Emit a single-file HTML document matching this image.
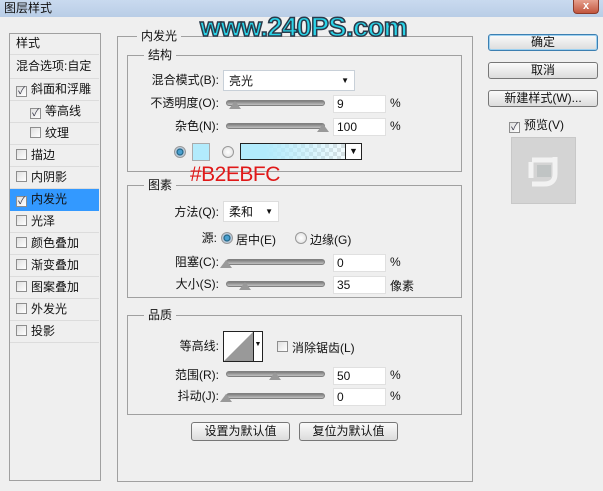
<!DOCTYPE html>
<html><head><meta charset="utf-8"><style>
*{margin:0;padding:0;box-sizing:border-box}
body{width:603px;height:491px;background:#efefef;position:relative;overflow:hidden;font-family:"Liberation Sans","Noto Sans CJK SC",sans-serif;font-size:12px;color:#111}
.a{position:absolute}
.title{left:0;top:0;width:603px;height:17px;background:linear-gradient(#c9daef,#b9cde6);}
.close{left:573px;top:0;width:26px;height:14px;background:linear-gradient(#e6a08e,#c2563e);border:1px solid #8c3a2a;border-top:none;border-radius:0 0 4px 4px;color:#fff;font-weight:bold;font-size:11px;text-align:center;line-height:13px}
.box{border:1px solid #a0a0a0}
.lbl{background:#efefef;padding:0 4px;line-height:14px}
.row{position:absolute;left:10px;width:89px;height:22px;border-bottom:1px solid #dcdcdc;line-height:21px;padding-left:6px;white-space:nowrap}
.cb{display:inline-block;width:11px;height:11px;border:1px solid #8e8e8e;background:linear-gradient(135deg,#e0e0e0,#fff);vertical-align:-1px;margin-right:4px;position:relative;font-size:10px;line-height:9px;text-align:center;color:#334}
.r{text-align:right;line-height:14px}
.inp{background:#fff;border:1px solid #e0e0e0;height:18px;line-height:17px;padding-left:3px}
.sl{height:6px;border-radius:3px;background:linear-gradient(#7d7d7d,#c0c0c0);border:1px solid #808080}
.h{width:0;height:0;border-left:6px solid transparent;border-right:6px solid transparent;border-bottom:8px solid #999}
.btn{border:1px solid #777;border-radius:3px;background:linear-gradient(#fafafa,#dcdcdc);text-align:center;line-height:15px}
.rad{width:12px;height:12px;border-radius:50%;border:1px solid #999;background:radial-gradient(#fff,#ddd)}
.rad.on{background:radial-gradient(#4aa0d0 0 2px,#135878 3px,#bcd 4px)}
</style></head><body>
<div class="a title"></div>
<div class="a" style="left:4px;top:1px;font-size:12px;line-height:14px">图层样式</div>
<div class="a close">x</div>

<div class="a box" style="left:9px;top:33px;width:92px;height:448px;background:#efefef"></div>
<div class="row" style="top:33px">样式</div>
<div class="row" style="top:55px;height:24px;line-height:23px">混合选项:自定</div>
<div class="row" style="top:79px"><span class="cb">✓</span>斜面和浮雕</div>
<div class="row" style="top:101px;padding-left:20px"><span class="cb">✓</span>等高线</div>
<div class="row" style="top:123px;padding-left:20px"><span class="cb"></span>纹理</div>
<div class="row" style="top:145px"><span class="cb"></span>描边</div>
<div class="row" style="top:167px"><span class="cb"></span>内阴影</div>
<div class="row" style="top:189px;background:#3399ff;border-color:#3399ff"><span class="cb">✓</span>内发光</div>
<div class="row" style="top:211px"><span class="cb"></span>光泽</div>
<div class="row" style="top:233px"><span class="cb"></span>颜色叠加</div>
<div class="row" style="top:255px"><span class="cb"></span>渐变叠加</div>
<div class="row" style="top:277px"><span class="cb"></span>图案叠加</div>
<div class="row" style="top:299px"><span class="cb"></span>外发光</div>
<div class="row" style="top:321px"><span class="cb"></span>投影</div>

<div class="a box" style="left:117px;top:36px;width:356px;height:446px"></div>
<div class="a lbl" style="left:137px;top:29px">内发光</div>
<div class="a box" style="left:127px;top:55px;width:335px;height:117px"></div>
<div class="a lbl" style="left:144px;top:48px">结构</div>

<div class="a r" style="left:130px;top:73px;width:89px">混合模式(B):</div>
<div class="a inp" style="left:223px;top:70px;width:132px;height:21px;line-height:20px;border-color:#c8d0d8;padding-left:5px">亮光<span style="position:absolute;right:5px;top:0;font-size:8px">▼</span></div>

<div class="a r" style="left:130px;top:96px;width:89px">不透明度(O):</div>
<div class="a sl" style="left:226px;top:100px;width:99px"></div>
<div class="a h" style="left:229px;top:101px"></div>
<div class="a inp" style="left:333px;top:95px;width:53px">9</div>
<div class="a" style="left:390px;top:96px">%</div>

<div class="a r" style="left:130px;top:119px;width:89px">杂色(N):</div>
<div class="a sl" style="left:226px;top:123px;width:99px"></div>
<div class="a h" style="left:317px;top:124px"></div>
<div class="a inp" style="left:333px;top:118px;width:53px">100</div>
<div class="a" style="left:390px;top:119px">%</div>

<div class="a rad on" style="left:174px;top:146px"></div>
<div class="a" style="left:192px;top:143px;width:18px;height:18px;background:#b2ebfc;border:1px solid #aaa"></div>
<div class="a rad" style="left:222px;top:146px"></div>
<div class="a" style="left:240px;top:143px;width:122px;height:17px;border:1px solid #222;background:linear-gradient(90deg,#b2ebfc 20%,rgba(178,235,252,0)),repeating-conic-gradient(#ddd 0 25%,#fff 0 50%) 0 0/8px 8px"></div>
<div class="a" style="left:345px;top:143px;width:17px;height:17px;border:1px solid #222;background:#fff;font-size:9px;text-align:center;line-height:15px">▼</div>

<div class="a" style="left:190px;top:163px;color:#e01818;font-size:21px;line-height:24px;letter-spacing:-0.5px">#B2EBFC</div>

<div class="a box" style="left:127px;top:185px;width:335px;height:113px"></div>
<div class="a lbl" style="left:144px;top:178px">图素</div>
<div class="a r" style="left:130px;top:205px;width:89px">方法(Q):</div>
<div class="a inp" style="left:223px;top:201px;width:56px;height:21px;line-height:20px;border-color:#ddd;padding-left:5px">柔和<span style="position:absolute;right:5px;top:0;font-size:8px">▼</span></div>
<div class="a r" style="left:130px;top:231px;width:87px">源:</div>
<div class="a rad on" style="left:221px;top:232px"></div>
<div class="a" style="left:236px;top:231px">居中(E)</div>
<div class="a rad" style="left:295px;top:232px"></div>
<div class="a" style="left:310px;top:231px">边缘(G)</div>
<div class="a r" style="left:130px;top:255px;width:89px">阻塞(C):</div>
<div class="a sl" style="left:226px;top:259px;width:99px"></div>
<div class="a h" style="left:220px;top:260px"></div>
<div class="a inp" style="left:333px;top:254px;width:53px">0</div>
<div class="a" style="left:390px;top:255px">%</div>
<div class="a r" style="left:130px;top:277px;width:89px">大小(S):</div>
<div class="a sl" style="left:226px;top:281px;width:99px"></div>
<div class="a h" style="left:239px;top:282px"></div>
<div class="a inp" style="left:333px;top:276px;width:53px">35</div>
<div class="a" style="left:390px;top:277px">像素</div>

<div class="a box" style="left:127px;top:315px;width:335px;height:100px"></div>
<div class="a lbl" style="left:144px;top:308px">品质</div>
<div class="a r" style="left:130px;top:339px;width:89px">等高线:</div>
<div class="a" style="left:223px;top:331px;width:40px;height:31px;border:1px solid #222;background:#fff"></div>
<svg class="a" style="left:224px;top:332px" width="29" height="29"><polygon points="0,29 29,0 29,29" fill="#999"/></svg>
<div class="a" style="left:253px;top:331px;width:10px;height:31px;border:1px solid #222;background:#fff;font-size:7px;text-align:center;line-height:26px">▼</div>
<div class="a" style="left:277px;top:340px"><span class="cb"></span></div>
<div class="a" style="left:292px;top:339px">消除锯齿(L)</div>
<div class="a r" style="left:130px;top:368px;width:89px">范围(R):</div>
<div class="a sl" style="left:226px;top:371px;width:99px"></div>
<div class="a h" style="left:269px;top:372px"></div>
<div class="a inp" style="left:333px;top:367px;width:53px">50</div>
<div class="a" style="left:390px;top:368px">%</div>
<div class="a r" style="left:130px;top:389px;width:89px">抖动(J):</div>
<div class="a sl" style="left:226px;top:393px;width:99px"></div>
<div class="a h" style="left:220px;top:394px"></div>
<div class="a inp" style="left:333px;top:388px;width:53px">0</div>
<div class="a" style="left:390px;top:389px">%</div>

<div class="a btn" style="left:191px;top:422px;width:99px;height:19px;line-height:17px">设置为默认值</div>
<div class="a btn" style="left:299px;top:422px;width:99px;height:19px;line-height:17px">复位为默认值</div>

<div class="a btn" style="left:488px;top:34px;width:110px;height:17px;border-color:#3c7fb1;box-shadow:inset 0 0 0 1px #9cd0f0">确定</div>
<div class="a btn" style="left:488px;top:62px;width:110px;height:17px">取消</div>
<div class="a btn" style="left:488px;top:90px;width:110px;height:17px">新建样式(W)...</div>
<div class="a" style="left:509px;top:116px"><span class="cb">✓</span>预览(V)</div>
<div class="a" style="left:511px;top:137px;width:65px;height:67px;background:#d4d4d4;border:1px solid #c8c8c8"></div>
<svg class="a" style="left:524px;top:152px" width="38" height="38"><path d="M8 8 L30 8 M31 5 L31 22 Q31 32 20 32 L8 32 M7 10 L7 26" stroke="#f2f2f2" stroke-width="5" fill="none"/><rect x="13" y="13" width="14" height="12" fill="#c0c4c4"/></svg>

<div class="a" style="left:200px;top:12px;font-family:'Liberation Sans',sans-serif;font-weight:bold;font-size:27px;line-height:30px;color:#2ad4e8;-webkit-text-stroke:1.5px #2a3a4a;letter-spacing:-0.5px">www.240PS.com</div>
</body></html>
